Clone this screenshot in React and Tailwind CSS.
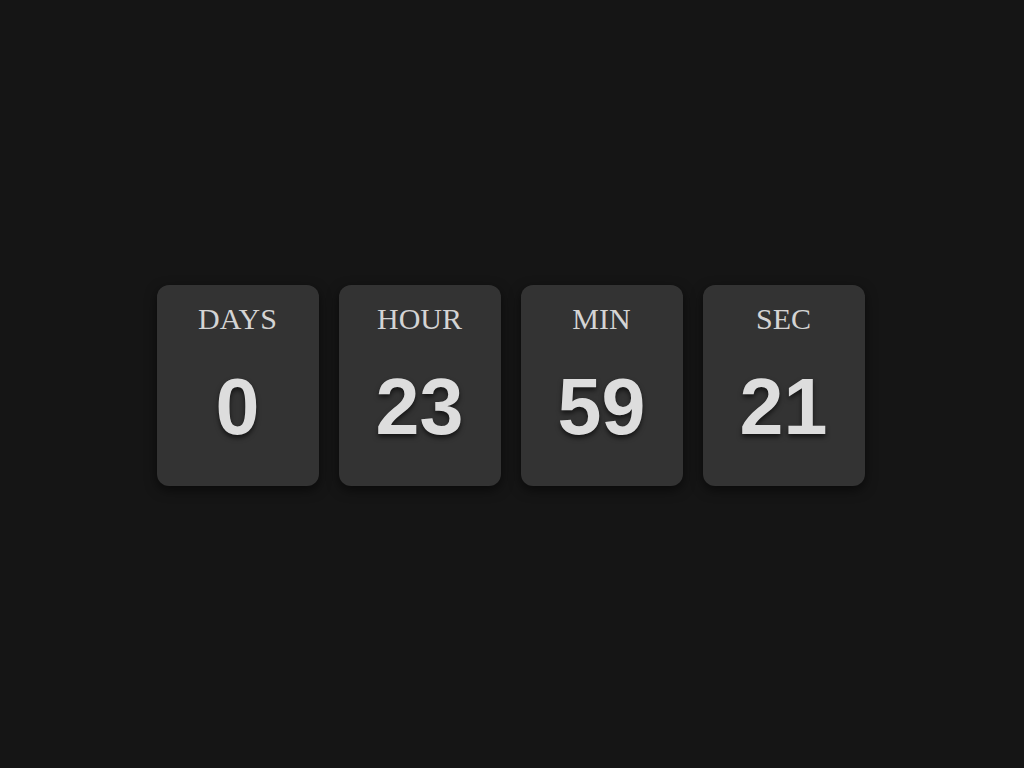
const units = [
  { label: "DAYS", value: "0" },
  { label: "HOUR", value: "23" },
  { label: "MIN", value: "59" },
  { label: "SEC", value: "21" },
];

function TimeCard({ label, value }) {
  return (
    <div className="w-[162px] h-[201px] rounded-xl bg-[#333333] shadow-[0_4px_12px_rgba(0,0,0,0.55)] flex flex-col items-center pt-[17px]">
      <div className="font-['Liberation_Serif',serif] text-[30px] leading-[34px] text-[#d4d4d4]">
        {label}
      </div>
      <div className="mt-[25px] font-['Liberation_Sans',Arial,sans-serif] font-bold text-[79px] leading-[92px] text-[#dddddd] [text-shadow:0_3px_5px_rgba(0,0,0,0.6)]">
        {value}
      </div>
    </div>
  );
}

export default function App() {
  return (
    <div className="w-full h-screen bg-[#151515] flex items-center justify-center pt-[3px] pr-[3px]">
      <div className="flex gap-5">
        {units.map((u) => (
          <TimeCard key={u.label} label={u.label} value={u.value} />
        ))}
      </div>
    </div>
  );
}
